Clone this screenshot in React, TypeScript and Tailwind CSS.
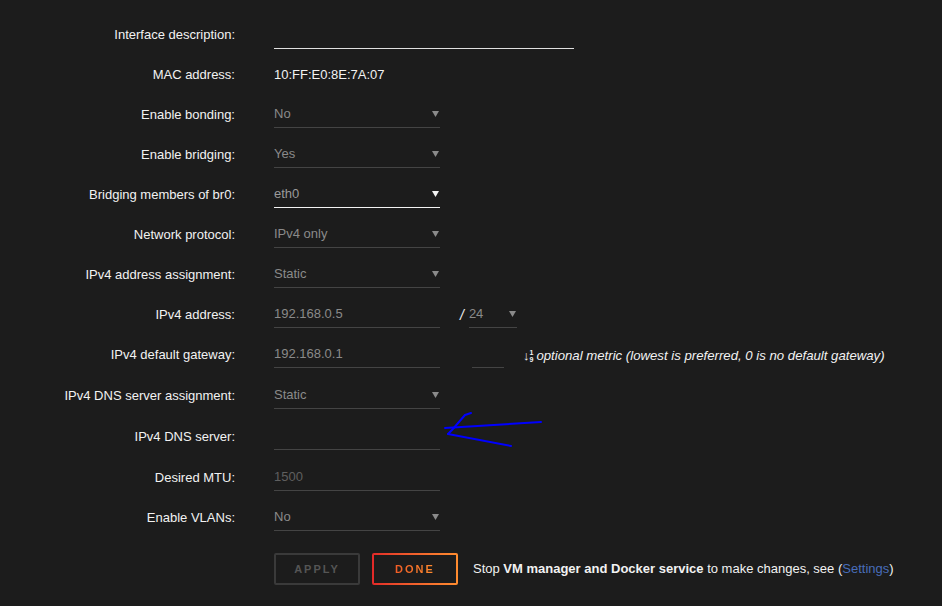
import React from "react";

const font = { fontFamily: '"Liberation Sans", Arial, sans-serif' };

function Caret({ light = false }: { light?: boolean }) {
  return (
    <svg width="7" height="7" viewBox="0 0 7 7" className="shrink-0">
      <path d="M0 1h7L3.5 7z" fill={light ? "#f2f2f2" : "#8a8a8a"} />
    </svg>
  );
}

function Row({ label, h = "h-[40px]", children }: { label: string; h?: string; children: React.ReactNode }) {
  return (
    <div className={`flex items-start ${h}`}>
      <div className="w-[235px] shrink-0 pt-[5px] text-right text-[13px] text-[#f2f2f2]">{label}</div>
      <div className="ml-[39px] flex items-start">{children}</div>
    </div>
  );
}

function Select({ value, active = false, w = "w-[166px]" }: { value: string; active?: boolean; w?: string }) {
  return (
    <div
      className={`flex h-[28px] items-center justify-between pr-[1px] border-b ${w} ${
        active ? "border-[#f2f2f2]" : "border-[#444]"
      }`}
    >
      <span className={`text-[13px] ${active ? "text-[#9a9a9a]" : "text-[#8a8a8a]"}`}>{value}</span>
      <Caret light={active} />
    </div>
  );
}

function Field({ value = "", w = "w-[166px]", dim = false }: { value?: string; w?: string; dim?: boolean }) {
  return (
    <div className={`flex h-[28px] items-center border-b border-[#444] ${w}`}>
      <span className={`text-[13px] ${dim ? "text-[#5f5f5f]" : "text-[#8a8a8a]"}`}>{value}</span>
    </div>
  );
}

export default function App() {
  return (
    <div className="relative h-[606px] w-[942px] overflow-hidden bg-[#1c1c1c]" style={font}>
      <div className="pt-[20px]">
        <Row label="Interface description:">
          <div className="h-[29px] w-[300px] border-b border-[#e0e0e0]" />
        </Row>
        <Row label="MAC address:">
          <div className="pt-[5px] text-[13px] text-[#f2f2f2]">10:FF:E0:8E:7A:07</div>
        </Row>
        <Row label="Enable bonding:">
          <Select value="No" />
        </Row>
        <Row label="Enable bridging:">
          <Select value="Yes" />
        </Row>
        <Row label="Bridging members of br0:">
          <Select value="eth0" active />
        </Row>
        <Row label="Network protocol:">
          <Select value="IPv4 only" />
        </Row>
        <Row label="IPv4 address assignment:">
          <Select value="Static" />
        </Row>
        <Row label="IPv4 address:">
          <Field value="192.168.0.5" />
          <span className="ml-[20px] pt-[5px] text-[14px] italic text-[#f2f2f2]">/</span>
          <div className="ml-[5px]">
            <Select value="24" w="w-[48px]" />
          </div>
        </Row>
        <Row label="IPv4 default gateway:" h="h-[41px]">
          <Field value="192.168.0.1" />
          <div className="ml-[32px]">
            <Field w="w-[32px]" />
          </div>
          <div className="ml-[19px] flex items-center gap-[3px] pt-[6px] text-[13.2px] italic text-[#f2f2f2]">
            <span className="flex items-center not-italic">
              <span className="text-[13px] font-bold leading-none">↓</span>
              <span className="flex flex-col text-[7px] font-bold leading-[7px]">
                <span>1</span>
                <span>9</span>
              </span>
            </span>
            <span>optional metric (lowest is preferred, 0 is no default gateway)</span>
          </div>
        </Row>
        <Row label="IPv4 DNS server assignment:" h="h-[41px]">
          <Select value="Static" />
        </Row>
        <Row label="IPv4 DNS server:" h="h-[41px]">
          <Field />
        </Row>
        <Row label="Desired MTU:">
          <Field value="1500" dim />
        </Row>
        <Row label="Enable VLANs:">
          <Select value="No" />
        </Row>

        <div className="ml-[274px] mt-[10px] flex items-center">
          <div className="flex h-[32px] w-[86px] items-center justify-center rounded-[2px] border-2 border-[#3a3a3a] text-[11px] font-bold tracking-[2px] text-[#555]">
            APPLY
          </div>
          <div className="ml-[12px] rounded-[2px] bg-gradient-to-r from-[#e22828] to-[#ff8c2f] p-[2px]">
            <div className="flex h-[28px] w-[82px] items-center justify-center bg-[#1c1c1c]">
              <span className="bg-gradient-to-r from-[#f25c26] to-[#ff8c2f] bg-clip-text text-[11px] font-bold tracking-[2px] text-transparent">
                DONE
              </span>
            </div>
          </div>
          <div className="ml-[15px] text-[13px] text-[#f2f2f2]">
            Stop <b>VM manager and Docker service</b> to make changes, see (
            <span className="text-[#486dba]">Settings</span>)
          </div>
        </div>
      </div>

      <svg className="pointer-events-none absolute left-0 top-0" width="942" height="606">
        <g fill="none" stroke="#0000ff" strokeWidth="2" strokeLinecap="round" strokeLinejoin="round">
          <path d="M445 428 L541 422" />
          <path d="M448 434 L511 446" />
          <path d="M471 413 L465 415 L452 430 L448 434" />
        </g>
      </svg>
    </div>
  );
}
